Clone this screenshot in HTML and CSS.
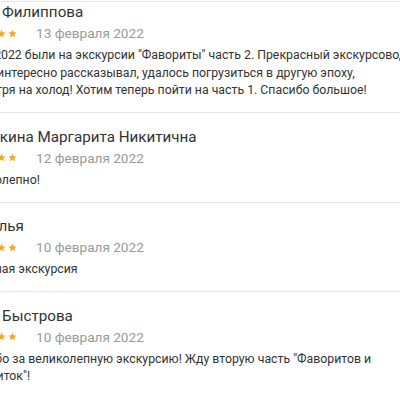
FILE: index.html
```html
<!DOCTYPE html>
<html lang="ru">
<head>
<meta charset="utf-8">
<link rel="stylesheet" href="styles.css">
</head>
<body>
<div class="list">
  <div class="review first">
    <div class="name">Вера Филиппова</div>
    <div class="meta"><span class="stars"><svg class="star" viewBox="0 0 24 24"><path d="M12 1.5l3.1 7.1 7.7.7-5.8 5.1 1.7 7.6L12 18l-6.7 4 1.7-7.6-5.8-5.1 7.7-.7z"/></svg><svg class="star" viewBox="0 0 24 24"><path d="M12 1.5l3.1 7.1 7.7.7-5.8 5.1 1.7 7.6L12 18l-6.7 4 1.7-7.6-5.8-5.1 7.7-.7z"/></svg><svg class="star" viewBox="0 0 24 24"><path d="M12 1.5l3.1 7.1 7.7.7-5.8 5.1 1.7 7.6L12 18l-6.7 4 1.7-7.6-5.8-5.1 7.7-.7z"/></svg><svg class="star" viewBox="0 0 24 24"><path d="M12 1.5l3.1 7.1 7.7.7-5.8 5.1 1.7 7.6L12 18l-6.7 4 1.7-7.6-5.8-5.1 7.7-.7z"/></svg><svg class="star" viewBox="0 0 24 24"><path d="M12 1.5l3.1 7.1 7.7.7-5.8 5.1 1.7 7.6L12 18l-6.7 4 1.7-7.6-5.8-5.1 7.7-.7z"/></svg></span><span class="date">13 февраля 2022</span></div>
    <p class="text">13.02.2022 были на экскурсии "Фавориты" часть 2. Прекрасный экскурсовод очень интересно рассказывал, удалось погрузиться в другую эпоху,<br>несмотря на холод! Хотим теперь пойти на часть 1. Спасибо большое!</p>
  </div>
  <div class="review">
    <div class="name">Сорокина Маргарита Никитична</div>
    <div class="meta"><span class="stars"><svg class="star" viewBox="0 0 24 24"><path d="M12 1.5l3.1 7.1 7.7.7-5.8 5.1 1.7 7.6L12 18l-6.7 4 1.7-7.6-5.8-5.1 7.7-.7z"/></svg><svg class="star" viewBox="0 0 24 24"><path d="M12 1.5l3.1 7.1 7.7.7-5.8 5.1 1.7 7.6L12 18l-6.7 4 1.7-7.6-5.8-5.1 7.7-.7z"/></svg><svg class="star" viewBox="0 0 24 24"><path d="M12 1.5l3.1 7.1 7.7.7-5.8 5.1 1.7 7.6L12 18l-6.7 4 1.7-7.6-5.8-5.1 7.7-.7z"/></svg><svg class="star" viewBox="0 0 24 24"><path d="M12 1.5l3.1 7.1 7.7.7-5.8 5.1 1.7 7.6L12 18l-6.7 4 1.7-7.6-5.8-5.1 7.7-.7z"/></svg><svg class="star" viewBox="0 0 24 24"><path d="M12 1.5l3.1 7.1 7.7.7-5.8 5.1 1.7 7.6L12 18l-6.7 4 1.7-7.6-5.8-5.1 7.7-.7z"/></svg></span><span class="date">12 февраля 2022</span></div>
    <p class="text">Великолепно!</p>
  </div>
  <div class="review">
    <div class="name">Наталья</div>
    <div class="meta"><span class="stars"><svg class="star" viewBox="0 0 24 24"><path d="M12 1.5l3.1 7.1 7.7.7-5.8 5.1 1.7 7.6L12 18l-6.7 4 1.7-7.6-5.8-5.1 7.7-.7z"/></svg><svg class="star" viewBox="0 0 24 24"><path d="M12 1.5l3.1 7.1 7.7.7-5.8 5.1 1.7 7.6L12 18l-6.7 4 1.7-7.6-5.8-5.1 7.7-.7z"/></svg><svg class="star" viewBox="0 0 24 24"><path d="M12 1.5l3.1 7.1 7.7.7-5.8 5.1 1.7 7.6L12 18l-6.7 4 1.7-7.6-5.8-5.1 7.7-.7z"/></svg><svg class="star" viewBox="0 0 24 24"><path d="M12 1.5l3.1 7.1 7.7.7-5.8 5.1 1.7 7.6L12 18l-6.7 4 1.7-7.6-5.8-5.1 7.7-.7z"/></svg><svg class="star" viewBox="0 0 24 24"><path d="M12 1.5l3.1 7.1 7.7.7-5.8 5.1 1.7 7.6L12 18l-6.7 4 1.7-7.6-5.8-5.1 7.7-.7z"/></svg></span><span class="date">10 февраля 2022</span></div>
    <p class="text">Отличная экскурсия</p>
  </div>
  <div class="review">
    <div class="name">Вера Быстрова</div>
    <div class="meta"><span class="stars"><svg class="star" viewBox="0 0 24 24"><path d="M12 1.5l3.1 7.1 7.7.7-5.8 5.1 1.7 7.6L12 18l-6.7 4 1.7-7.6-5.8-5.1 7.7-.7z"/></svg><svg class="star" viewBox="0 0 24 24"><path d="M12 1.5l3.1 7.1 7.7.7-5.8 5.1 1.7 7.6L12 18l-6.7 4 1.7-7.6-5.8-5.1 7.7-.7z"/></svg><svg class="star" viewBox="0 0 24 24"><path d="M12 1.5l3.1 7.1 7.7.7-5.8 5.1 1.7 7.6L12 18l-6.7 4 1.7-7.6-5.8-5.1 7.7-.7z"/></svg><svg class="star" viewBox="0 0 24 24"><path d="M12 1.5l3.1 7.1 7.7.7-5.8 5.1 1.7 7.6L12 18l-6.7 4 1.7-7.6-5.8-5.1 7.7-.7z"/></svg><svg class="star" viewBox="0 0 24 24"><path d="M12 1.5l3.1 7.1 7.7.7-5.8 5.1 1.7 7.6L12 18l-6.7 4 1.7-7.6-5.8-5.1 7.7-.7z"/></svg></span><span class="date">10 февраля 2022</span></div>
    <p class="text">Спасибо за великолепную экскурсию! Жду вторую часть "Фаворитов и фавориток"!</p>
  </div>
</div>
</body>
</html>
```
FILE: styles.css
```css
html, body {
  margin: 0;
  padding: 0;
  background: #fff;
  overflow: hidden;
}
body {
  font-family: Roboto, "Noto Sans", sans-serif;
  color: #333;
  width: 400px;
  height: 400px;
}
.list {
  margin-left: -36px;
  width: 460px;
  padding-top: 1px;
}
.review {
  border-top: 1px solid #e6e6e6;
  padding: 13.5px 0 12.5px;
}
.review.first {
  padding-top: 0;
}
.name {
  font-size: 15.2px;
  line-height: 20px;
  color: #333;
}
.meta {
  display: flex;
  align-items: center;
  gap: 19px;
  height: 20px;
  margin-top: 1px;
}
.stars {
  display: flex;
  gap: 2px;
}
.star {
  width: 9px;
  height: 9px;
  fill: #f5a623;
}
.date {
  font-size: 13.6px;
  line-height: 20px;
  color: #999;
}
.text {
  margin: 4px 0 0 -4px;
  font-size: 12.3px;
  line-height: 17.5px;
  color: #333;
}
```
